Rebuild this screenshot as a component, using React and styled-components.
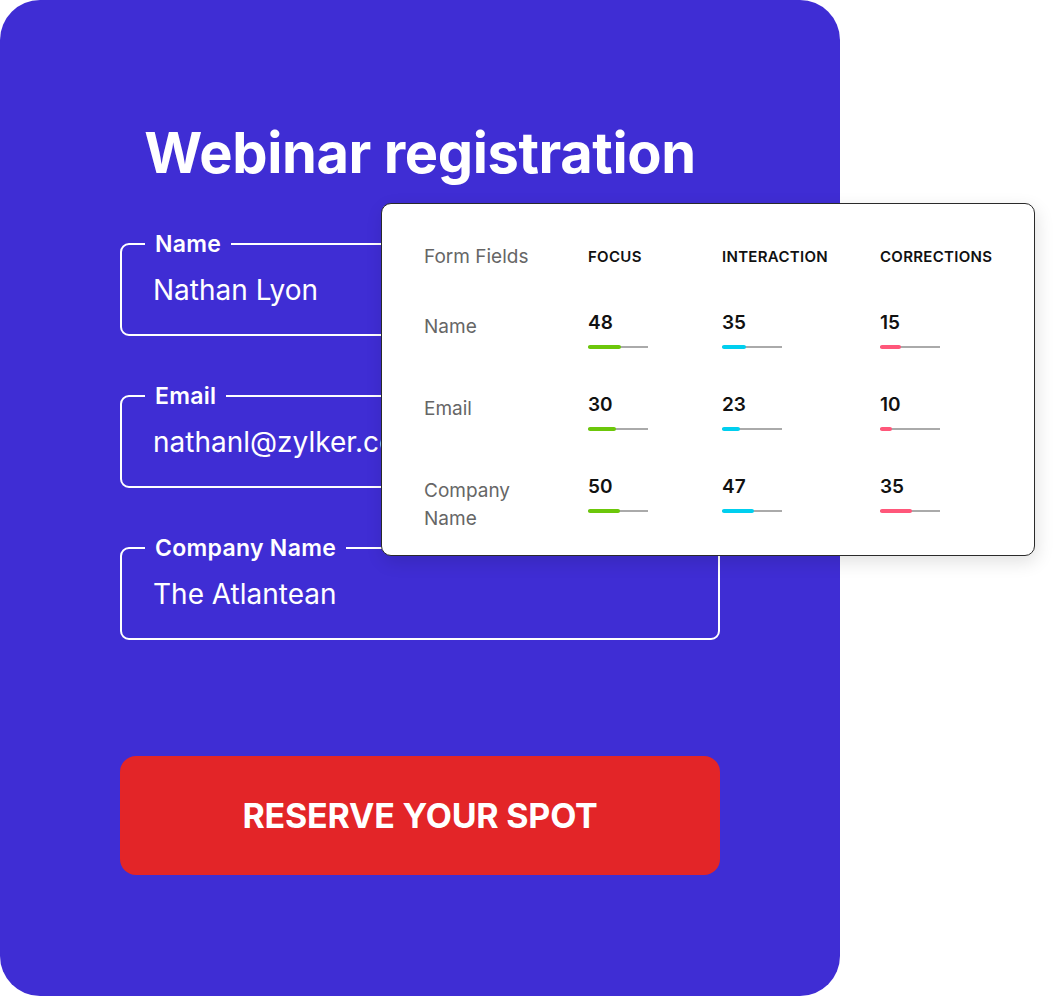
import styled, { createGlobalStyle } from "styled-components";

const GlobalStyle = createGlobalStyle`
  * { box-sizing: border-box; }
  body {
    margin: 0;
    background: #ffffff;
    font-family: Inter, "Noto Sans", sans-serif;
  }
`;

const fields = [
  { label: "Name", value: "Nathan Lyon" },
  { label: "Email", value: "nathanl@zylker.com" },
  { label: "Company Name", value: "The Atlantean" },
];

const stats = [
  { name: ["Name"], values: [48, 35, 15], fill: [33, 24, 21] },
  { name: ["Email"], values: [30, 23, 10], fill: [28, 18, 12] },
  { name: ["Company", "Name"], values: [50, 47, 35], fill: [32, 32, 32] },
];

const barColors = ["#6cc70a", "#00cfef", "#ff577a"];

const App = () => {
  return (
    <>
      <GlobalStyle />
      <Page>
        <Panel>
          <Title>Webinar registration</Title>
          <Form>
            {fields.map((field) => (
              <Field key={field.label}>
                <Legend>{field.label}</Legend>
                <Value>{field.value}</Value>
              </Field>
            ))}
            <ReserveButton>RESERVE YOUR SPOT</ReserveButton>
          </Form>
        </Panel>

        <StatsCard>
          <HeadRow>
            <FieldHead>Form Fields</FieldHead>
            <ColHead>FOCUS</ColHead>
            <ColHead>INTERACTION</ColHead>
            <ColHead>CORRECTIONS</ColHead>
          </HeadRow>
          {stats.map((row) => (
            <StatRow key={row.name.join(" ")}>
              <RowName>
                {row.name.map((line) => (
                  <span key={line}>{line}</span>
                ))}
              </RowName>
              {row.values.map((num, i) => (
                <Metric key={i}>
                  <Number>{num}</Number>
                  <Track>
                    <Fill $color={barColors[i]} style={{ width: row.fill[i] }} />
                  </Track>
                </Metric>
              ))}
            </StatRow>
          ))}
        </StatsCard>
      </Page>
    </>
  );
};

export default App;

const Page = styled.div`
  position: relative;
  width: 1056px;
  height: 996px;
  overflow: hidden;
`;

const Panel = styled.div`
  width: 840px;
  height: 996px;
  background: #3f2dd4;
  border-radius: 40px;
  padding-top: 122px;
  display: flex;
  flex-direction: column;
  align-items: center;
`;

const Title = styled.h1`
  margin: 0;
  color: #ffffff;
  font-size: 56px;
  line-height: 62px;
  font-weight: 700;
  letter-spacing: -0.4px;
`;

const Form = styled.div`
  width: 600px;
  margin-top: 47px;
  display: flex;
  flex-direction: column;
  gap: 47px;
`;

const Field = styled.fieldset`
  margin: 0;
  height: 105px;
  border: 2px solid #ffffff;
  border-radius: 9px;
  padding: 14px 0 0 31px;
`;

const Legend = styled.legend`
  margin-left: -8px;
  padding: 0 10px;
  color: #ffffff;
  font-size: 23px;
  line-height: 26px;
  font-weight: 600;
  letter-spacing: 0.3px;
`;

const Value = styled.div`
  color: #ffffff;
  font-size: 28px;
  line-height: 38px;
  font-weight: 400;
  white-space: nowrap;
`;

const ReserveButton = styled.button`
  margin-top: 69px;
  height: 119px;
  border: none;
  border-radius: 16px;
  background: #e32528;
  color: #ffffff;
  font-family: Inter, "Noto Sans", sans-serif;
  font-size: 34px;
  font-weight: 700;
  letter-spacing: -0.2px;
  cursor: pointer;
`;

const StatsCard = styled.div`
  position: absolute;
  left: 381px;
  top: 203px;
  width: 654px;
  height: 353px;
  background: #ffffff;
  border: 1px solid #2a2a2a;
  border-radius: 10px;
  box-shadow: 2px 6px 18px rgba(0, 0, 0, 0.12);
  padding: 39px 0 0 42px;
`;

const columns = "164px 134px 158px auto";

const HeadRow = styled.div`
  display: grid;
  grid-template-columns: ${columns};
  align-items: center;
  height: 28px;
  margin-bottom: 40px;
`;

const StatRow = styled.div`
  display: grid;
  grid-template-columns: ${columns};
  align-items: start;
  height: 82px;
`;

const FieldHead = styled.div`
  color: #666666;
  font-size: 19px;
  line-height: 28px;
`;

const ColHead = styled.div`
  color: #111111;
  font-size: 15px;
  font-weight: 600;
  line-height: 28px;
  letter-spacing: 0.3px;
`;

const RowName = styled.div`
  padding-top: 2px;
  display: flex;
  flex-direction: column;
  color: #666666;
  font-size: 19px;
  line-height: 28px;
`;

const Metric = styled.div`
  display: flex;
  flex-direction: column;
  gap: 10px;
`;

const Number = styled.div`
  color: #111111;
  font-size: 19px;
  font-weight: 600;
  line-height: 24px;
`;

const Track = styled.div`
  position: relative;
  width: 60px;
  height: 4px;
  display: flex;
  align-items: center;

  &::before {
    content: "";
    position: absolute;
    left: 0;
    right: 0;
    height: 1.5px;
    background: #aaaaaa;
  }
`;

const Fill = styled.div`
  position: relative;
  height: 4px;
  border-radius: 2px;
  background: ${(p) => p.$color};
`;
